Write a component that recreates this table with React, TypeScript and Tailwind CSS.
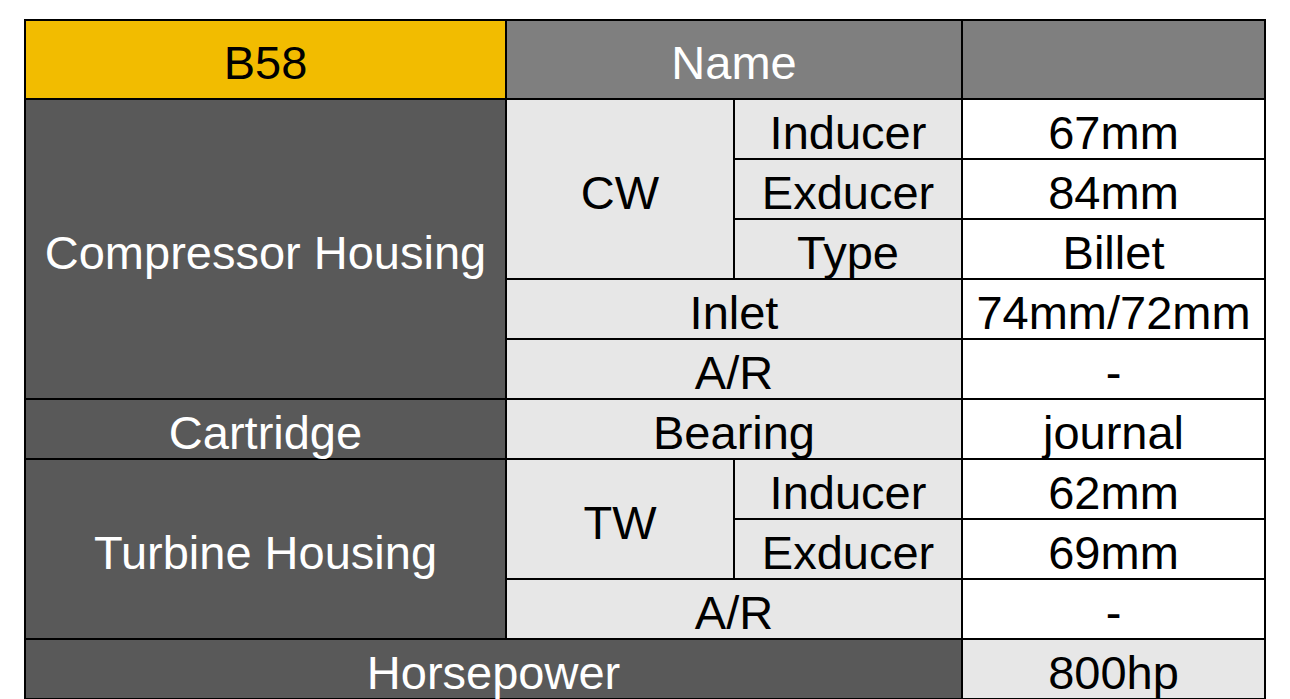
const cell = "flex items-center justify-center leading-none pt-[6px]";
const dark = `${cell} bg-[#595959] text-white`;
const light = `${cell} bg-[#e7e7e7] text-black`;
const white = `${cell} bg-white text-black`;

export default function App() {
  return (
    <div className="min-h-screen bg-white pt-[19px] pl-[24px] font-['Liberation_Sans',Arial,sans-serif] text-[47px]">
      <div className="grid w-[1242px] grid-cols-[479px_226px_226px_301px] grid-rows-[77px_repeat(10,58px)] gap-[2px] bg-black p-[2px]">
        {/* header */}
        <div className={`${cell} bg-[#f2bc00] text-black`}>B58</div>
        <div className={`${cell} col-span-2 bg-[#7f7f7f] text-white`}>Name</div>
        <div className="bg-[#7f7f7f]"></div>

        {/* compressor */}
        <div className={`${dark} row-span-5`}>Compressor Housing</div>
        <div className={`${light} row-span-3`}>CW</div>
        <div className={light}>Inducer</div>
        <div className={white}>67mm</div>
        <div className={light}>Exducer</div>
        <div className={white}>84mm</div>
        <div className={light}>Type</div>
        <div className={white}>Billet</div>
        <div className={`${light} col-span-2`}>Inlet</div>
        <div className={white}>74mm/72mm</div>
        <div className={`${light} col-span-2`}>A/R</div>
        <div className={white}>-</div>

        {/* cartridge */}
        <div className={dark}>Cartridge</div>
        <div className={`${light} col-span-2`}>Bearing</div>
        <div className={white}>journal</div>

        {/* turbine */}
        <div className={`${dark} row-span-3`}>Turbine Housing</div>
        <div className={`${light} row-span-2`}>TW</div>
        <div className={light}>Inducer</div>
        <div className={white}>62mm</div>
        <div className={light}>Exducer</div>
        <div className={white}>69mm</div>
        <div className={`${light} col-span-2`}>A/R</div>
        <div className={white}>-</div>

        <div className={`${dark} col-span-3`}>Horsepower</div>
        <div className={light}>800hp</div>
      </div>
    </div>
  );
}
